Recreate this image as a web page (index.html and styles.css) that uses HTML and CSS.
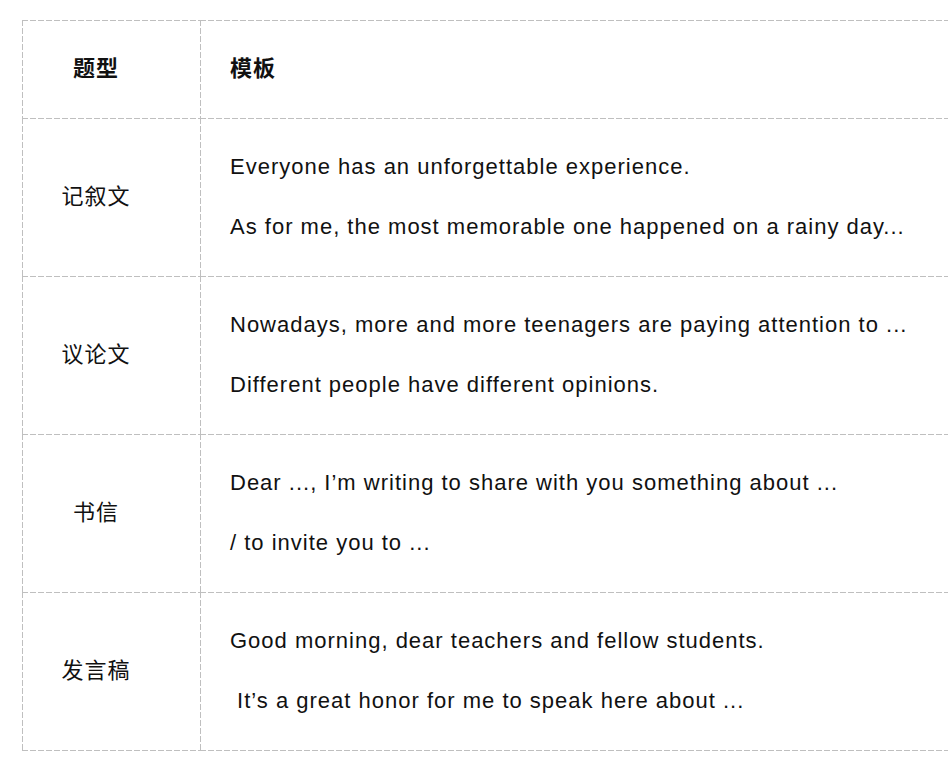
FILE: index.html
```html
<!DOCTYPE html>
<html lang="zh">
<head>
<meta charset="utf-8">
<link rel="stylesheet" href="styles.css">
</head>
<body>
<div class="wrap">
<table class="tpl">
  <thead>
    <tr><th class="type">题型</th><th class="body">模板</th></tr>
  </thead>
  <tbody>
    <tr>
      <td class="type">记叙文</td>
      <td class="body"><p>Everyone has an unforgettable experience.</p><p>As for me, the most memorable one happened on a rainy day...</p></td>
    </tr>
    <tr>
      <td class="type">议论文</td>
      <td class="body"><p>Nowadays, more and more teenagers are paying attention to ...</p><p>Different people have different opinions.</p></td>
    </tr>
    <tr>
      <td class="type">书信</td>
      <td class="body"><p>Dear ..., I’m writing to share with you something about ...</p><p>/ to invite you to ...</p></td>
    </tr>
    <tr class="last">
      <td class="type">发言稿</td>
      <td class="body"><p>Good morning, dear teachers and fellow students.</p><p>&nbsp;It’s a great honor for me to speak here about ...</p></td>
    </tr>
  </tbody>
</table>
</div>
</body>
</html>
```

FILE: styles.css
```css
html, body {
  margin: 0;
  padding: 0;
  background: #ffffff;
  overflow: hidden;
}
.wrap {
  padding: 20px 0 0 22px;
}
.tpl {
  border-collapse: separate;
  border-spacing: 0;
  width: 1000px;
  font-family: "Liberation Sans", "Noto Sans CJK SC", sans-serif;
  font-size: 22px;
  line-height: 30px;
  color: #111111;
  letter-spacing: 1px;
}
.tpl th, .tpl td {
  border: 0;
  padding: 34px 0 34px 0;
  vertical-align: middle;
  background-image:
    repeating-linear-gradient(to right, #bfbfbf 0 6px, transparent 6px 8px),
    repeating-linear-gradient(to bottom, #bfbfbf 0 6px, transparent 6px 8px);
  background-position: left top, left top;
  background-size: 100% 1px, 1px 100%;
  background-repeat: no-repeat;
}
.tpl tr.last td {
  padding-bottom: 35px;
  background-image:
    repeating-linear-gradient(to right, #bfbfbf 0 6px, transparent 6px 8px),
    repeating-linear-gradient(to bottom, #bfbfbf 0 6px, transparent 6px 8px),
    repeating-linear-gradient(to right, #bfbfbf 0 6px, transparent 6px 8px);
  background-position: left top, left top, left bottom;
  background-size: 100% 1px, 1px 100%, 100% 1px;
  background-repeat: no-repeat;
}
.tpl th {
  font-weight: bold;
}
.tpl .type {
  width: 178px;
  box-sizing: border-box;
  text-align: center;
  padding-right: 30px;
}
.tpl .body {
  text-align: left;
  padding-left: 30px;
}
.tpl p {
  margin: 0;
}
.tpl p + p {
  margin-top: 30px;
}
```
